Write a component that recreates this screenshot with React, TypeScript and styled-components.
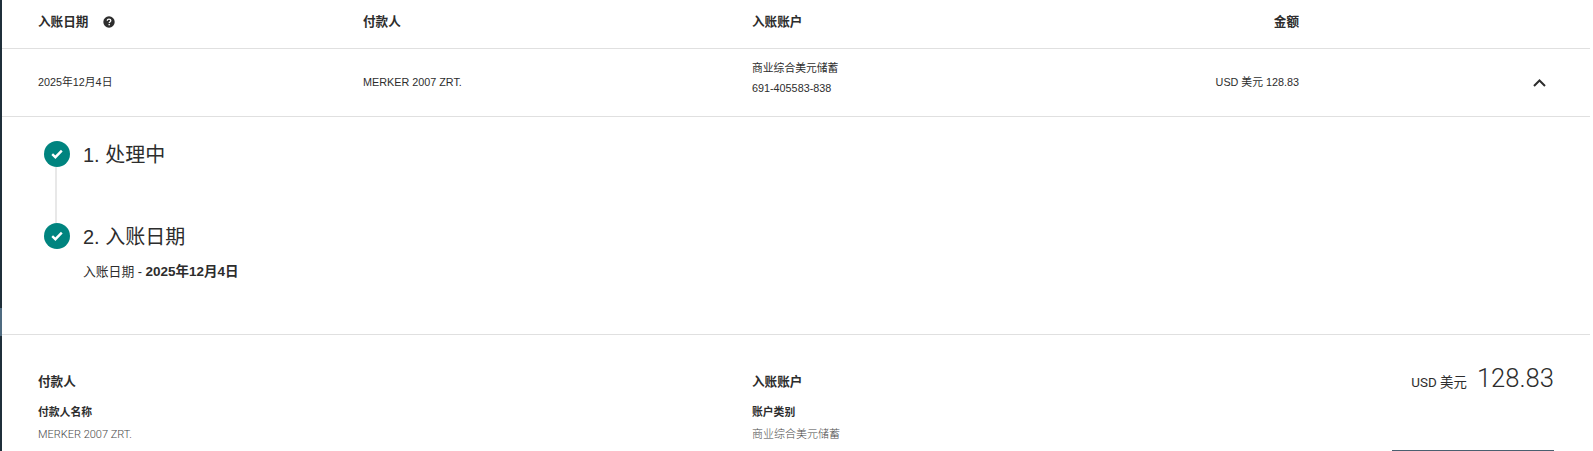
import React, { FC } from 'react';
import styled, { createGlobalStyle } from 'styled-components';

const FONT = `Arial, "Liberation Sans", "Noto Sans CJK SC", sans-serif`;
const TEXT = '#2d2d2d';
const LINE = '#e0e0e0';
const TEAL = '#00847f';

const GlobalStyle = createGlobalStyle`
  html, body {
    margin: 0;
    padding: 0;
    background: #fff;
    overflow: hidden;
  }
  body {
    font-family: ${FONT};
    color: ${TEXT};
  }
`;

const Page = styled.div`
  width: 1593px;
  height: 451px;
  display: flex;
  overflow: hidden;
`;

const SideEdge = styled.div`
  width: 2px;
  flex: none;
  background: linear-gradient(
    to bottom,
    #1f2f3a 308px,
    #4f6b80 308px,
    #4f6b80 336px,
    #1f2f3a 336px
  );
`;

const Content = styled.div`
  width: 1588px;
  flex: none;
`;

const Columns = styled.div`
  display: grid;
  grid-template-columns: 325px 389px 200px 347px 1fr;
  align-items: center;
  padding-left: 36px;
`;

const HeadRow = styled(Columns)`
  height: 43px;
  padding-bottom: 5px;
  border-bottom: 1px solid ${LINE};
`;

const HeadCell = styled.div<{ $right?: boolean }>`
  display: flex;
  align-items: center;
  justify-content: ${(p) => (p.$right ? 'flex-end' : 'flex-start')};
  font-size: 12.6px;
  font-weight: bold;
  line-height: 18px;
`;

const HelpDot = styled.span`
  display: inline-flex;
  margin-left: 15px;
`;

const BodyRow = styled(Columns)`
  height: 65px;
  padding-bottom: 2px;
  border-bottom: 1px solid ${LINE};
`;

const BodyCell = styled.div<{ $stacked?: boolean; $right?: boolean }>`
  padding-bottom: ${(p) => (p.$stacked ? '8px' : '0')};
  font-size: 10.8px;
  line-height: 20px;
  text-align: ${(p) => (p.$right ? 'right' : 'left')};
  white-space: nowrap;
`;

const ToggleCell = styled.div`
  display: flex;
  justify-content: flex-end;
  padding: 2px 44px 0 0;
`;

const Steps = styled.div`
  height: 218px;
  box-sizing: border-box;
  padding: 24px 0 0 42px;
  border-bottom: 1px solid ${LINE};
`;

const Step = styled.div<{ $tail?: boolean }>`
  display: grid;
  grid-template-columns: 26px 1fr;
  column-gap: 13px;
  height: ${(p) => (p.$tail ? '82px' : 'auto')};
  position: relative;
  &::before {
    content: '';
    display: ${(p) => (p.$tail ? 'block' : 'none')};
    position: absolute;
    left: 11px;
    top: 26px;
    bottom: 0;
    width: 2px;
    background: #e8e8e8;
  }
`;

const StepMark = styled.div`
  width: 26px;
  height: 26px;
  border-radius: 50%;
  background: ${TEAL};
  display: flex;
  align-items: center;
  justify-content: center;
`;

const StepTitle = styled.div`
  padding-top: 1px;
  font-size: 20px;
  line-height: 26px;
`;

const StepNote = styled.div`
  grid-column: 2;
  margin-top: 13px;
  font-size: 12.8px;
  line-height: 18px;
  strong {
    font-size: 13.5px;
    font-weight: bold;
  }
`;

const Details = styled.div`
  display: grid;
  grid-template-columns: 714px 1fr auto;
  padding: 0 36px;
`;

const DetailBlock = styled.div`
  padding-top: 37px;
`;

const DetailHeading = styled.div`
  font-size: 12.6px;
  font-weight: bold;
  line-height: 20px;
`;

const DetailLabel = styled.div`
  margin-top: 12px;
  font-size: 10.8px;
  font-weight: bold;
  line-height: 16px;
`;

const DetailValue = styled.div`
  margin-top: 7px;
  font-family: Roboto, "Noto Sans CJK SC", sans-serif;
  font-size: 11px;
  font-weight: 300;
  line-height: 16px;
  color: #4a4a4a;
`;

const Total = styled.div`
  width: 162px;
  padding-top: 30px;
  display: flex;
  flex-direction: column;
  align-items: flex-end;
`;

const TotalAmount = styled.div`
  display: flex;
  align-items: baseline;
  gap: 10px;
  font-family: Roboto, "Noto Sans CJK SC", sans-serif;
  font-size: 13.4px;
`;

const TotalValue = styled.span`
  font-size: 25.6px;
  font-weight: 300;
  line-height: 26px;
`;

const TotalRule = styled.div`
  width: 100%;
  margin-top: 59px;
  border-top: 1px solid #4a6070;
`;

const HelpIcon: FC = () => (
  <svg width="12" height="12" viewBox="0 0 12 12">
    <circle cx="6" cy="6" r="5.7" fill="#2d2d2d" />
    <path
      d="M4.3 4.7C4.3 3.7 5 3.1 6 3.1s1.8.6 1.8 1.5c0 1.3-1.6 1.3-1.6 2.4"
      fill="none"
      stroke="#fff"
      strokeWidth="1.3"
    />
    <rect x="5.5" y="7.9" width="1.4" height="1.4" fill="#fff" />
  </svg>
);

const ChevronUp: FC = () => (
  <svg width="13" height="8" viewBox="0 0 13 8">
    <path d="M1 7l5.5-5.5L12 7" fill="none" stroke="#2d2d2d" strokeWidth="2" />
  </svg>
);

const CheckIcon: FC = () => (
  <svg width="12" height="10" viewBox="0 0 12 10">
    <path d="M1.2 5.2l3.2 3L10.8 1.6" fill="none" stroke="#fff" strokeWidth="2.4" />
  </svg>
);

const App: FC = () => (
  <Page>
    <GlobalStyle />
    <SideEdge />
    <Content>
      <HeadRow>
        <HeadCell>
          入账日期
          <HelpDot>
            <HelpIcon />
          </HelpDot>
        </HeadCell>
        <HeadCell>付款人</HeadCell>
        <HeadCell>入账账户</HeadCell>
        <HeadCell $right>金额</HeadCell>
      </HeadRow>
      <BodyRow>
        <BodyCell>2025年12月4日</BodyCell>
        <BodyCell>MERKER 2007 ZRT.</BodyCell>
        <BodyCell $stacked>
          商业综合美元储蓄
          <br />
          691-405583-838
        </BodyCell>
        <BodyCell $right>USD 美元 128.83</BodyCell>
        <ToggleCell>
          <ChevronUp />
        </ToggleCell>
      </BodyRow>
      <Steps>
        <Step $tail>
          <StepMark>
            <CheckIcon />
          </StepMark>
          <StepTitle>1. 处理中</StepTitle>
        </Step>
        <Step>
          <StepMark>
            <CheckIcon />
          </StepMark>
          <StepTitle>2. 入账日期</StepTitle>
          <StepNote>
            入账日期 - <strong>2025年12月4日</strong>
          </StepNote>
        </Step>
      </Steps>
      <Details>
        <DetailBlock>
          <DetailHeading>付款人</DetailHeading>
          <DetailLabel>付款人名称</DetailLabel>
          <DetailValue>MERKER 2007 ZRT.</DetailValue>
        </DetailBlock>
        <DetailBlock>
          <DetailHeading>入账账户</DetailHeading>
          <DetailLabel>账户类别</DetailLabel>
          <DetailValue>商业综合美元储蓄</DetailValue>
        </DetailBlock>
        <Total>
          <TotalAmount>
            USD 美元
            <TotalValue>128.83</TotalValue>
          </TotalAmount>
          <TotalRule />
        </Total>
      </Details>
    </Content>
  </Page>
);

export default App;
